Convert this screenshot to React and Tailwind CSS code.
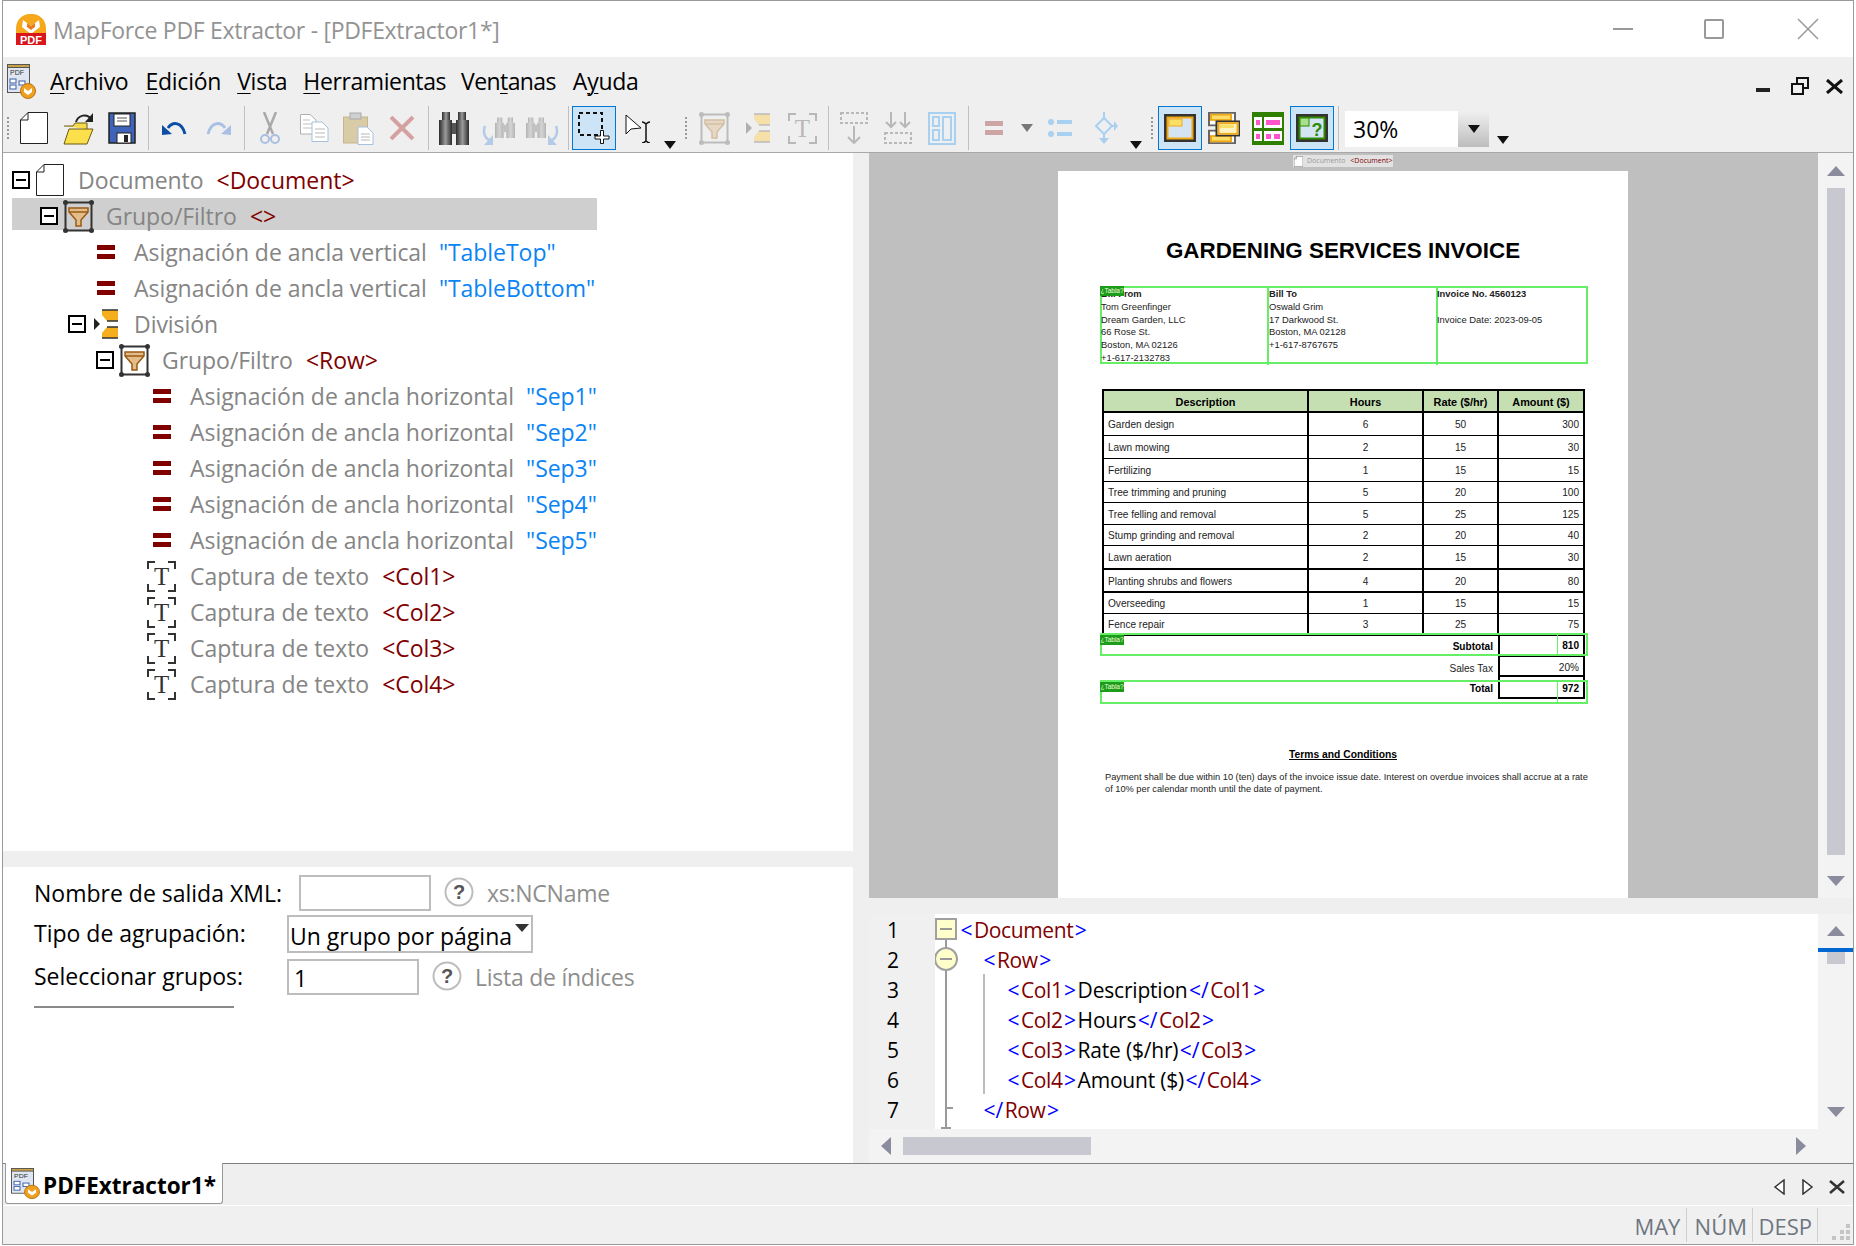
import React from "react";

const Tri = ({ dir = "up", className = "" }) => {
	const pts = {
		up: "9,0 18,10 0,10",
		down: "0,0 18,0 9,10",
		left: "10,0 10,18 0,9",
		right: "0,0 10,9 0,18",
	};
	const vertical = dir === "up" || dir === "down";
	return (
		<svg width={vertical ? 18 : 10} height={vertical ? 10 : 18} className={`block shrink-0 ${className}`}>
			<polygon points={pts[dir]} fill="#8a8c9e" />
		</svg>
	);
};

const LogoIcon = () => (
	<svg width="30" height="31" viewBox="0 0 30 31" className="shrink-0">
		<path d="M0 20V14A14 14 0 0 1 15 0A14 14 0 0 1 30 14V20Z" fill="#f5a81c" />
		<path d="M7 6L15 12L23 6L24 13L15 20L6 13Z" fill="#fff" />
		<path d="M11 9L15 12L19 9V13L15 16L11 13Z" fill="#e9791a" />
		<rect y="19" width="30" height="12" fill="#d8161c" />
		<text x="15" y="29.5" textAnchor="middle" fontSize="11" fontWeight="700" fill="#fff" fontFamily="Liberation Sans">PDF</text>
	</svg>
);

const AppIcon = ({ w = 29, h = 35 }) => (
	<svg width={w} height={h} viewBox="0 0 29 35" preserveAspectRatio="none" className="shrink-0">
		<rect x="0.5" y="0.5" width="22" height="28" fill="#dfe6f2" stroke="#555" />
		<rect x="0.5" y="0.5" width="22" height="3" fill="#c9a24a" stroke="#555" />
		<text x="3" y="11" fontSize="7" fill="#333" fontFamily="Liberation Sans">PDF</text>
		<rect x="3" y="15" width="6" height="4" fill="#fff" stroke="#3a5ca8" />
		<rect x="3" y="21" width="6" height="4" fill="#fff" stroke="#3a5ca8" />
		<rect x="12" y="17" width="6" height="4" fill="#fff" stroke="#3a5ca8" />
		<circle cx="21" cy="27" r="7.5" fill="#f0a020" stroke="#b87410" />
		<path d="M17 24L21 27L25 24V28L21 31L17 28Z" fill="#fff" />
	</svg>
);

const PageIcon = ({ w = 28, h = 32, stroke = "#222" }) => (
	<svg width={w} height={h} viewBox="0 0 28 32" className="shrink-0">
		<path d="M8 .5H27.5V31.5H.5V8ZM8 .5V8H.5" fill="#fff" stroke={stroke} />
	</svg>
);

const OpenIcon = () => (
	<svg width="31" height="33" viewBox="0 0 31 33">
		<path d="M1 14H10L12 11H24V17" fill="#f6d94a" stroke="#6b5a10" />
		<path d="M6 17H30L24 32H1Z" fill="#fbe04c" stroke="#6b5a10" />
		<path d="M13 10C15 3 24 1 28 7" fill="none" stroke="#222" strokeWidth="2" />
		<path d="M30 1V10H22Z" fill="#222" />
	</svg>
);

const SaveIcon = () => (
	<svg width="28" height="32" viewBox="0 0 28 32">
		<path d="M1 1H27V31H1Z" fill="#3f63b8" stroke="#222" strokeWidth="1.5" />
		<rect x="6" y="2" width="16" height="12" fill="#fff" stroke="#222" />
		<path d="M9 6H19M9 9H19" stroke="#555" />
		<rect x="9" y="21" width="14" height="10" fill="#fff" stroke="#222" />
		<rect x="16" y="23" width="4" height="7" fill="#222" />
	</svg>
);

const UndoIcon = ({ color = "#0c4ea6", flip = false }) => (
	<svg width="25" height="16" viewBox="0 0 25 16" className={flip ? "-scale-x-100" : ""}>
		<path d="M6 8C11 1 20 2 23 14" fill="none" stroke={color} strokeWidth="3" />
		<path d="M0 5L10 14L0 15Z" fill={color} />
	</svg>
);

const CutIcon = () => (
	<svg width="20" height="33" viewBox="0 0 20 33">
		<path d="M4 0L13 22M16 0L7 22" stroke="#a9a9a9" strokeWidth="2.5" fill="none" />
		<circle cx="5" cy="27" r="4" fill="none" stroke="#a8bfe0" strokeWidth="2" />
		<circle cx="15" cy="27" r="4" fill="none" stroke="#a8bfe0" strokeWidth="2" />
	</svg>
);

const CopyIcon = () => (
	<svg width="29" height="28" viewBox="0 0 29 28">
		<path d="M.5 .5H10L16 6V20H.5Z" fill="#fff" stroke="#b0b0b0" />
		<path d="M3 6H10M3 10H13M3 14H13" stroke="#c0c0c0" />
		<path d="M12 8H22L28 14V27.5H12Z" fill="#fff" stroke="#a8bfe0" />
		<path d="M15 15H25M15 19H25M15 23H25" stroke="#b8b8b8" />
	</svg>
);

const PasteIcon = () => (
	<svg width="31" height="33" viewBox="0 0 31 33">
		<rect x=".5" y="5" width="24" height="26" fill="#d8cba6" stroke="#c4b78e" />
		<rect x="7" y="1" width="11" height="6" fill="#d0d0d0" stroke="#aaa" />
		<path d="M15 15H24L30 21V32.5H15Z" fill="#fff" stroke="#a8bfe0" />
		<path d="M18 22H27M18 25H27M18 28H27" stroke="#b8b8b8" />
	</svg>
);

const DeleteIcon = () => (
	<svg width="26" height="24" viewBox="0 0 26 24">
		<path d="M2 1L24 23M24 1L2 23" stroke="#d4a0a0" strokeWidth="4" />
	</svg>
);

const BinoIcon = ({ faded = false, w = 30 }) => (
	<svg width={w} height="33" viewBox="0 0 30 33" className={faded ? "opacity-30" : ""}>
		<defs>
			<linearGradient id="bino" x1="0" x2="1" y1="0" y2="0">
				<stop offset="0" stopColor="#2c2c2c" />
				<stop offset="0.5" stopColor="#9a9a9a" />
				<stop offset="1" stopColor="#2c2c2c" />
			</linearGradient>
		</defs>
		<rect x="3" y="0" width="8" height="8" fill="url(#bino)" />
		<rect x="19" y="0" width="8" height="8" fill="url(#bino)" />
		<rect x="0" y="8" width="13" height="25" fill="url(#bino)" />
		<rect x="17" y="8" width="13" height="25" fill="url(#bino)" />
		<rect x="13" y="11" width="4" height="11" fill="#555" />
	</svg>
);

const FindIcon = ({ flip = false }) => (
	<div className={`relative w-[33px] h-[33px] ${flip ? "-scale-x-100" : ""}`}>
		<div className="absolute right-0 top-0 w-[20px] h-[26px] overflow-hidden">
			<BinoIcon faded w={20} />
		</div>
		<svg width="33" height="33" viewBox="0 0 33 33" className="absolute left-0 top-0">
			<path d="M3 14C0 22 4 28 10 29" fill="none" stroke="#b4cbe8" strokeWidth="2.5" />
			<path d="M11 23V33H2Z" fill="#b4cbe8" />
		</svg>
	</div>
);

const SelectIcon = () => (
	<svg width="32" height="32" viewBox="0 0 32 32">
		<rect x="1" y="1" width="23" height="22" fill="none" stroke="#111" strokeWidth="2" strokeDasharray="4 3" />
		<path d="M22.5 18.5H25.5V24H31V27H25.5V31.5H22.5V27H17V24H22.5Z" fill="#fff" stroke="#111" />
	</svg>
);

const CursorIcon = () => (
	<svg width="27" height="29" viewBox="0 0 27 29">
		<path d="M1 1V20L6 15L16 14Z" fill="#fff" stroke="#111" />
		<path d="M17 8C19 8 20 9 21 10C22 9 23 8 25 8M21 10V28M17 29C19 29 20 28 21 27C22 28 23 29 25 29" fill="none" stroke="#111" strokeWidth="1.5" />
	</svg>
);

const DropArrow = ({ color = "#111" }) => (
	<svg width="12" height="8" viewBox="0 0 12 8">
		<path d="M0 0H12L6 8Z" fill={color} />
	</svg>
);

const FilterIcon = ({ frame = "#333", fill = "#e3bc8b", edge = "#9a5a12" }) => (
	<svg width="31" height="33" viewBox="0 0 31 33" className="shrink-0">
		<rect x="2.5" y="2.5" width="26" height="28" fill="none" stroke={frame} strokeWidth="2" />
		<g fill={frame}>
			<circle cx="2.5" cy="2.5" r="2.5" />
			<circle cx="28.5" cy="2.5" r="2.5" />
			<circle cx="2.5" cy="30.5" r="2.5" />
			<circle cx="28.5" cy="30.5" r="2.5" />
		</g>
		<path d="M6 8H25V12L18 20V26H13V20L6 12Z" fill={fill} stroke={edge} strokeWidth="1.5" />
		<path d="M6 12H25" stroke={edge} strokeWidth="1.5" />
	</svg>
);

const SplitIcon = ({ fill = "#f5ae1c", edge = "#333", tri = "#222" }) => (
	<svg width="25" height="30" viewBox="0 0 25 30" className="shrink-0">
		<path d="M0 9L6 15L0 21Z" fill={tri} />
		<path d="M8 1H24V12H13L8 6Z" fill={fill} />
		<path d="M8 29H24V18H13L8 24Z" fill={fill} />
		<path d="M8 1H24M8 29H24M13 12H24M13 18H24" stroke={edge} strokeWidth="1.5" />
	</svg>
);

const CaptureIcon = ({ color = "#333" }) => (
	<svg width="29" height="31" viewBox="0 0 29 31" className="shrink-0">
		<path d="M1 8V1H8M21 1H28V8M1 23V30H8M21 30H28V23" fill="none" stroke={color} strokeWidth="2" />
		<text x="14.5" y="24" textAnchor="middle" fontSize="25" fill={color} fontFamily="Liberation Serif">T</text>
	</svg>
);

const DashDownIcon = () => (
	<svg width="28" height="32" viewBox="0 0 28 32" stroke="#b8b8b8" fill="none" strokeWidth="2">
		<rect x="1" y="1" width="26" height="10" strokeDasharray="3 2" />
		<path d="M14 14V31M8 25L14 31L20 25" />
	</svg>
);

const DoubleDownIcon = () => (
	<svg width="28" height="32" viewBox="0 0 28 32" stroke="#b8b8b8" fill="none" strokeWidth="2">
		<path d="M7 0V15M2 10L7 15L12 10M21 0V15M16 10L21 15L26 10" />
		<rect x="1" y="21" width="26" height="10" strokeDasharray="3 2" />
	</svg>
);

const LayoutIcon = () => (
	<svg width="28" height="33" viewBox="0 0 28 33" stroke="#a8d0f0" fill="none" strokeWidth="2">
		<rect x="1" y="1" width="26" height="31" />
		<rect x="5" y="5" width="6" height="9" />
		<rect x="5" y="18" width="6" height="10" />
		<rect x="15" y="5" width="8" height="23" />
	</svg>
);

const EqualsIcon = ({ color = "#800000" }) => (
	<svg width="18" height="14" viewBox="0 0 18 14" className="shrink-0">
		<rect width="18" height="5" fill={color} />
		<rect y="9" width="18" height="5" fill={color} />
	</svg>
);

const BulletsIcon = () => (
	<svg width="24" height="18" viewBox="0 0 24 18" fill="#a8d0f0">
		<circle cx="3" cy="3" r="3" />
		<circle cx="3" cy="15" r="3" />
		<rect x="9" y="1" width="15" height="4" />
		<rect x="9" y="13" width="15" height="4" />
	</svg>
);

const DiamondIcon = () => (
	<svg width="28" height="32" viewBox="0 0 28 32" fill="none" stroke="#a8d0f0" strokeWidth="2">
		<path d="M14 0V6M14 6L22 14L14 22L6 14ZM14 22V27M22 14H25" />
		<path d="M24 9L28 14L24 19Z" fill="#a8d0f0" stroke="none" />
		<path d="M9 26H19L14 32Z" fill="#a8d0f0" stroke="none" />
	</svg>
);

const PanelIcon = () => (
	<svg width="32" height="28" viewBox="0 0 32 28">
		<rect x="1.5" y="1.5" width="29" height="25" fill="#d3e5f5" stroke="#333" strokeWidth="3" />
		<rect x="3.5" y="3.5" width="25" height="21" fill="none" stroke="#f0a818" strokeWidth="2" />
		<rect x="5" y="5" width="13" height="7" fill="#f9df68" stroke="#f0a818" />
	</svg>
);

const GroupIcon = () => (
	<svg width="32" height="32" viewBox="0 0 32 36" preserveAspectRatio="none">
		<rect x="1" y="1" width="26" height="14" fill="#fff" stroke="#666" strokeWidth="2" />
		<rect x="1" y="21" width="26" height="14" fill="#fff" stroke="#666" strokeWidth="2" />
		<rect x="3" y="3" width="20" height="6" fill="#f9df68" stroke="#f0a818" strokeWidth="2" />
		<rect x="3" y="27" width="20" height="6" fill="#f9df68" stroke="#f0a818" strokeWidth="2" />
		<rect x="8.5" y="10.5" width="23" height="16" fill="#fff3c4" stroke="#333" strokeWidth="2" />
		<rect x="10.5" y="12.5" width="19" height="12" fill="none" stroke="#f0a818" strokeWidth="2" />
		<rect x="12" y="14" width="14" height="4" fill="#f9df68" />
	</svg>
);

const TableIcon = () => (
	<svg width="32" height="33" viewBox="0 0 32 33">
		<rect width="32" height="33" fill="#2f8000" />
		<rect x="2" y="5" width="8" height="11" fill="#fff" />
		<rect x="12" y="5" width="18" height="11" fill="#fff" />
		<rect x="2" y="19" width="8" height="10" fill="#fff" />
		<rect x="12" y="19" width="18" height="10" fill="#fff" />
		<rect x="4" y="8" width="4" height="5" fill="#ff55cc" />
		<rect x="14" y="8" width="14" height="5" fill="#ff55cc" />
		<rect x="4" y="22" width="4" height="5" fill="#ff55cc" />
		<rect x="14" y="22" width="5" height="5" fill="#ff55cc" />
		<rect x="22" y="22" width="6" height="5" fill="#ff55cc" />
	</svg>
);

const HelpPanelIcon = () => (
	<svg width="32" height="28" viewBox="0 0 32 28">
		<rect x="1.5" y="1.5" width="29" height="25" fill="#d3e5f5" stroke="#333" strokeWidth="3" />
		<rect x="3.5" y="3.5" width="25" height="21" fill="none" stroke="#2f8a00" strokeWidth="2" />
		<rect x="4" y="4" width="9" height="8" fill="#a8e08c" stroke="#2f8a00" />
		<text x="21" y="22" textAnchor="middle" fontSize="18" fontWeight="700" fill="#2f8a00" fontFamily="Liberation Sans">?</text>
	</svg>
);

const HelpCircle = () => (
	<svg width="30" height="30" viewBox="0 0 30 30" className="shrink-0">
		<circle cx="15" cy="15" r="13.5" fill="#fff" stroke="#bdbdbd" strokeWidth="2" />
		<text x="15" y="22" textAnchor="middle" fontSize="20" fontWeight="700" fill="#555" fontFamily="Liberation Sans">?</text>
	</svg>
);

const Expander = () => (
	<div className="w-[18px] h-[18px] border-2 border-black bg-white flex items-center justify-center shrink-0">
		<div className="w-[10px] h-[2px] bg-black" />
	</div>
);

const Btn = ({ active, children }) => (
	<div
		className={`w-[44px] h-[44px] shrink-0 flex items-center justify-center ${
			active ? "bg-[#cde4f7] border border-[#0078d7]" : ""
		}`}
	>
		{children}
	</div>
);

const Sep = () => (
	<div className="w-[8px] h-[44px] shrink-0 flex justify-center">
		<div className="w-px h-full bg-[#c0c0c0]" />
	</div>
);

const Grip = ({ w = "w-[12px]" }) => (
	<div className={`${w} h-[44px] shrink-0 flex flex-col items-center justify-center gap-[2px]`}>
		<div className="w-[2px] h-[2px] bg-[#999]" />
		<div className="w-[2px] h-[2px] bg-[#999]" />
		<div className="w-[2px] h-[2px] bg-[#999]" />
		<div className="w-[2px] h-[2px] bg-[#999]" />
		<div className="w-[2px] h-[2px] bg-[#999]" />
		<div className="w-[2px] h-[2px] bg-[#999]" />
	</div>
);

const ArrowSlot = ({ color, mid }) => (
	<div className={`h-[44px] shrink-0 flex justify-center ${mid ? "w-[22px] items-center" : "w-[20px] items-end pb-[1px]"}`}>
		<DropArrow color={color} />
	</div>
);

const Toolbar = () => (
	<div className="h-[47px] pt-[1px] flex bg-[#efefef]">
		<Grip w="w-[9px]" />
		<Btn><PageIcon /></Btn>
		<Btn><OpenIcon /></Btn>
		<Btn><SaveIcon /></Btn>
		<Sep />
		<Btn><UndoIcon /></Btn>
		<Btn><UndoIcon color="#a8c0e4" flip /></Btn>
		<Sep />
		<Btn><CutIcon /></Btn>
		<Btn><CopyIcon /></Btn>
		<Btn><PasteIcon /></Btn>
		<Btn><DeleteIcon /></Btn>
		<Sep />
		<Btn><BinoIcon /></Btn>
		<Btn><FindIcon /></Btn>
		<Btn><FindIcon flip /></Btn>
		<Sep />
		<Btn active><SelectIcon /></Btn>
		<Btn><CursorIcon /></Btn>
		<ArrowSlot />
		<Grip />
		<Btn><FilterIcon frame="#bcbcbc" fill="#e6d8c4" edge="#d2bfa4" /></Btn>
		<Btn><SplitIcon fill="#f6dfa8" edge="#bcbcbc" tri="#b0b0b0" /></Btn>
		<Btn><CaptureIcon color="#b8b8b8" /></Btn>
		<Sep />
		<Btn><DashDownIcon /></Btn>
		<Btn><DoubleDownIcon /></Btn>
		<Btn><LayoutIcon /></Btn>
		<Sep />
		<Btn><EqualsIcon color="#cda5a5" /></Btn>
		<ArrowSlot color="#777" mid />
		<Btn><BulletsIcon /></Btn>
		<Btn><DiamondIcon /></Btn>
		<ArrowSlot />
		<Grip />
		<Btn active><PanelIcon /></Btn>
		<Btn><GroupIcon /></Btn>
		<Btn><TableIcon /></Btn>
		<Btn active><HelpPanelIcon /></Btn>
		<Sep />
		<div className="ml-[3px] mt-[5px] w-[144px] h-[36px] bg-white flex items-center justify-between text-[23px] text-black">
			<span className="ml-[8px]">30%</span>
			<div className="w-[31px] h-[36px] bg-gradient-to-b from-[#f0f0f0] to-[#bdbdbd] flex items-center justify-center">
				<DropArrow />
			</div>
		</div>
		<div className="w-[28px] h-[44px] flex justify-center items-end pb-[6px]">
			<DropArrow />
		</div>
	</div>
);

const Menu = ({ u, rest, pre, className = "" }) => (
	<span className={className}>
		{pre}
		<span className="underline decoration-1 underline-offset-[3px]">{u}</span>
		{rest}
	</span>
);

const TreeRow = ({ pl, exp, expGap, icon, labelCls, label, tag, value }) => (
	<div className={`h-[36px] flex items-center ${pl}`}>
		{exp && <Expander />}
		{exp && <div className={expGap} />}
		{icon}
		<span className={`${labelCls} text-[#858585]`}>{label}</span>
		{tag && <span className="ml-[13px] text-[#800000]">{tag}</span>}
		{value && <span className="ml-[12px] text-[#0a84f5]">{value}</span>}
	</div>
);

const Tree = () => (
	<div className="h-[698px] bg-white pt-[9px] text-[23px] tracking-[-0.05px]">
		<TreeRow pl="pl-[9px]" exp expGap="w-[6px]" icon={<PageIcon />} labelCls="ml-[14px]" label="Documento" tag="<Document>" />
		<div className="h-[36px] ml-[9px] w-[585px]">
			<div className="h-[32px] bg-[#cfcfcf]">
				<TreeRow pl="pl-[28px]" exp expGap="w-[5px]" icon={<FilterIcon />} labelCls="ml-[12px]" label="Grupo/Filtro" tag="<>" />
			</div>
		</div>
		<TreeRow pl="pl-[94px]" icon={<EqualsIcon />} labelCls="ml-[19px]" label="Asignación de ancla vertical" value={'"TableTop"'} />
		<TreeRow pl="pl-[94px]" icon={<EqualsIcon />} labelCls="ml-[19px]" label="Asignación de ancla vertical" value={'"TableBottom"'} />
		<TreeRow pl="pl-[65px]" exp expGap="w-[8px]" icon={<SplitIcon />} labelCls="ml-[15px]" label="División" />
		<TreeRow pl="pl-[93px]" exp expGap="w-[5px]" icon={<FilterIcon />} labelCls="ml-[12px]" label="Grupo/Filtro" tag="<Row>" />
		{["Sep1", "Sep2", "Sep3", "Sep4", "Sep5"].map((s) => (
			<TreeRow key={s} pl="pl-[150px]" icon={<EqualsIcon />} labelCls="ml-[19px]" label="Asignación de ancla horizontal" value={`"${s}"`} />
		))}
		{["Col1", "Col2", "Col3", "Col4"].map((c) => (
			<TreeRow key={c} pl="pl-[144px]" icon={<CaptureIcon />} labelCls="ml-[14px]" label="Captura de texto" tag={`<${c}>`} />
		))}
	</div>
);

const Props = () => (
	<div className="flex-1 bg-white pl-[31px] text-[23px] text-black">
		<div className="h-[48px] pt-[8px] flex items-start">
			<span className="w-[265px] h-[36px] leading-[36px] shrink-0">Nombre de salida XML:</span>
			<div className="w-[132px] h-[36px] border-2 border-[#bdbdbd] shrink-0" />
			<div className="ml-[13px] mt-[2px]"><HelpCircle /></div>
			<span className="ml-[13px] h-[36px] leading-[36px] tracking-[-0.25px] text-[#8e8e8e]">xs:NCName</span>
		</div>
		<div className="h-[44px] flex items-start">
			<span className="w-[253px] h-[36px] leading-[36px] shrink-0">Tipo de agrupación:</span>
			<div className="w-[246px] h-[38px] border-2 border-[#bdbdbd] flex items-center justify-between pl-[1px] pr-[2px] shrink-0">
				<span className="mt-[4px]">Un grupo por página</span>
				<svg width="14" height="8" viewBox="0 0 14 8" className="mb-[12px]"><path d="M0 0H14L7 8Z" fill="#333" /></svg>
			</div>
		</div>
		<div className="h-[49px] flex items-start">
			<span className="w-[253px] h-[35px] leading-[35px] shrink-0">Seleccionar grupos:</span>
			<div className="w-[132px] h-[36px] border-2 border-[#bdbdbd] pl-[5px] leading-[34px] shrink-0">1</div>
			<div className="ml-[13px] mt-[2px]"><HelpCircle /></div>
			<span className="ml-[13px] h-[36px] leading-[36px] tracking-[-0.25px] text-[#8e8e8e]">Lista de índices</span>
		</div>
		<div className="w-[200px] h-[2px] bg-[#8a8a8a] -mt-[2px]" />
	</div>
);

const Tag = () => (
	<div className="absolute left-0 top-0 w-[24px] h-[10px] bg-[#1b9c1b] text-[6.5px] leading-[10px] text-[#f3ffd8] text-center overflow-hidden">
		¿Tabla?
	</div>
);

const invoiceRows = [
	["Garden design", 6, 50, 300, "h-[23px] border-b"],
	["Lawn mowing", 2, 15, 30, "h-[23px] border-b"],
	["Fertilizing", 1, 15, 15, "h-[23px] border-b"],
	["Tree trimming and pruning", 5, 20, 100, "h-[21px] border-b"],
	["Tree felling and removal", 5, 25, 125, "h-[22px] border-b"],
	["Stump grinding and removal", 2, 20, 40, "h-[21px] border-b"],
	["Lawn aeration", 2, 15, 30, "h-[24px] border-b-2"],
	["Planting shrubs and flowers", 4, 20, 80, "h-[23px] border-b-2"],
	["Overseeding", 1, 15, 15, "h-[21px] border-b"],
	["Fence repair", 3, 25, 75, "h-[20px]"],
];

const Invoice = () => (
	<div className="relative w-[570px] mt-[4px] flex-1 bg-white overflow-hidden [font-family:'Liberation_Sans',sans-serif] text-[#222] text-[10.1px] tracking-normal">
		<div className="pt-[67px] h-[93px] text-center text-[22.4px] leading-[26px] font-bold text-black whitespace-nowrap">
			GARDENING SERVICES INVOICE
		</div>
		<div className="relative ml-[42px] mt-[22px] w-[488px] h-[78px] border-2 border-[#66ee66] grid grid-cols-[167px_169px_1fr] text-[9.4px] leading-[12.8px]">
			<div className="border-r-2 border-[#66ee66] -ml-px pl-0">
				<b>Bill From</b><br />Tom Greenfinger<br />Dream Garden, LLC<br />66 Rose St.<br />Boston, MA 02126<br />+1-617-2132783
			</div>
			<div className="border-r-2 border-[#66ee66]">
				<b>Bill To</b><br />Oswald Grim<br />17 Darkwood St.<br />Boston, MA 02128<br />+1-617-8767675
			</div>
			<div className="-ml-px">
				<b>Invoice No. 4560123</b><br /><br />Invoice Date: 2023-09-05
			</div>
			<div className="absolute -left-[2px] -top-[2px]"><div className="relative w-[24px] h-[10px]"><Tag /></div></div>
		</div>
		<div className="ml-[44px] mt-[25px] w-[483px] border-2 border-b-0 border-black">
			<div className="grid grid-cols-[205px_115px_75px_1fr] h-[22px] bg-[#c5dfb3] border-b-2 border-black font-bold text-center text-[10.9px] leading-[23px] text-black">
				<div className="border-r-2 border-black">Description</div>
				<div className="border-r-2 border-black">Hours</div>
				<div className="border-r-2 border-black">Rate ($/hr)</div>
				<div>Amount ($)</div>
			</div>
			{invoiceRows.map(([name, hours, rate, amount, cls]) => (
				<div key={name} className={`grid grid-cols-[205px_115px_75px_1fr] border-black ${cls}`}>
					<div className="border-r-2 border-black pl-[4px] pt-[2px] flex items-center whitespace-nowrap">{name}</div>
					<div className="border-r-2 border-black pt-[2px] flex items-center justify-center">{hours}</div>
					<div className="border-r-2 border-black pt-[2px] flex items-center justify-center">{rate}</div>
					<div className="pt-[2px] flex items-center justify-end pr-[4px]">{amount}</div>
				</div>
			))}
		</div>
		<div className="ml-[44px] w-[483px] border-t-2 border-black">
			<div className="flex h-[21px] font-bold text-black">
				<div className="w-[396px] pr-[5px] text-right leading-[21px]">Subtotal</div>
				<div className="flex-1 border-l-2 border-r-2 border-b-2 border-black pr-[4px] text-right leading-[20px]">810</div>
			</div>
			<div className="flex h-[20px]">
				<div className="w-[396px] pr-[5px] text-right leading-[24px]">Sales Tax</div>
				<div className="flex-1 border-l-2 border-r-2 border-b-2 border-black pr-[4px] text-right leading-[22px]">20%</div>
			</div>
			<div className="flex h-[22px] font-bold text-black">
				<div className="w-[396px] pr-[5px] text-right leading-[24px]">Total</div>
				<div className="flex-1 border-l-2 border-r-2 border-b-2 border-black pr-[4px] text-right leading-[24px]">972</div>
			</div>
		</div>
		<div className="mt-[49px] text-center font-bold underline text-black text-[10.3px] leading-[14px]">Terms and Conditions</div>
		<div className="ml-[47px] mt-[9px] text-[9.25px] leading-[12px] whitespace-nowrap">
			Payment shall be due within 10 (ten) days of the invoice issue date. Interest on overdue invoices shall accrue at a rate
			<br />
			of 10% per calendar month until the date of payment.
		</div>
		<div className="absolute left-[42px] top-[462px] w-[488px] h-[23px] border-2 border-[#66ee66]">
			<div className="absolute -left-[2px] top-0 w-[24px] h-[10px]"><Tag /></div>
			<div className="absolute left-[455px] -top-[2px] -bottom-[2px] w-px bg-[#66ee66]" />
		</div>
		<div className="absolute left-[42px] top-[509px] w-[488px] h-[24px] border-2 border-[#66ee66]">
			<div className="absolute -left-[2px] top-0 w-[24px] h-[10px]"><Tag /></div>
			<div className="absolute left-[455px] -top-[2px] -bottom-[2px] w-px bg-[#66ee66]" />
		</div>
	</div>
);

const B = ({ children }) => <span className="text-[#0000ff] mx-[1.5px]">{children}</span>;
const N = ({ children }) => <span className="text-[#800000] tracking-[-0.4px]">{children}</span>;

const ColLine = ({ col, text }) => (
	<div className="h-[30px] pl-[47px] flex items-center whitespace-nowrap">
		<B>&lt;</B><N>{col}</N><B>&gt;</B>
		<span className="text-black tracking-[-0.2px]">{text}</span>
		<B>&lt;/</B><N>{col}</N><B>&gt;</B>
	</div>
);

const FoldColumn = () => (
	<svg width="24" height="215" viewBox="0 0 24 215" className="shrink-0">
		<path d="M11 26V215" stroke="#9a9a9a" strokeWidth="2" />
		<rect x="1" y="5" width="20" height="20" fill="#ffffcc" stroke="#a0a0a0" strokeWidth="2" />
		<path d="M5 15H17" stroke="#999" strokeWidth="2" />
		<circle cx="11" cy="45" r="11" fill="#ffffcc" stroke="#a0a0a0" strokeWidth="2" />
		<path d="M5 45H17" stroke="#999" strokeWidth="2" />
		<path d="M11 194H18" stroke="#9a9a9a" strokeWidth="2" />
		<path d="M6 214H16" stroke="#9a9a9a" strokeWidth="2" />
	</svg>
);

const XmlPane = () => (
	<div className="h-[215px] flex text-[21px] overflow-hidden">
		<div className="flex-1 flex bg-white">
			<div className="w-[66px] bg-[#f0f0f0] pt-px pl-[18px] shrink-0 text-black">
				{[1, 2, 3, 4, 5, 6, 7].map((n) => (
					<div key={n} className="h-[30px] leading-[30px]">{n}</div>
				))}
			</div>
			<FoldColumn />
			<div className="relative flex-1 pt-[2px]">
				<div className="absolute left-[24px] top-[60px] w-[2px] h-[120px] bg-[#bcbcbc]" />
				<div className="h-[30px] flex items-center"><B>&lt;</B><N>Document</N><B>&gt;</B></div>
				<div className="h-[30px] pl-[23px] flex items-center"><B>&lt;</B><N>Row</N><B>&gt;</B></div>
				<ColLine col="Col1" text="Description" />
				<ColLine col="Col2" text="Hours" />
				<ColLine col="Col3" text="Rate ($/hr)" />
				<ColLine col="Col4" text="Amount ($)" />
				<div className="h-[30px] pl-[23px] flex items-center"><B>&lt;/</B><N>Row</N><B>&gt;</B></div>
			</div>
		</div>
		<div className="w-[35px] bg-[#f3f3f3] flex flex-col items-center pt-[12px] pb-[12px]">
			<Tri dir="up" />
			<div className="mt-[12px] w-full h-[4px] bg-[#0068d0]" />
			<div className="w-[18px] h-[12px] bg-[#c8c9d0]" />
			<Tri dir="down" className="mt-auto" />
		</div>
	</div>
);

const App = () => (
	<div className="w-[1856px] h-[1246px] bg-white overflow-hidden pl-[2px] [font-family:'Open_Sans',sans-serif]">
		<div className="w-[1852px] h-[1245px] border border-[#9a9a9a] flex flex-col">
			<div className="h-[56px] bg-white flex items-center pl-[13px] shrink-0">
				<LogoIcon />
				<span className="ml-[7px] mt-[2px] text-[23px] tracking-[-0.3px] text-[#939393]">MapForce PDF Extractor - [PDFExtractor1*]</span>
				<div className="ml-auto flex items-center">
					<div className="w-[20px] h-[2px] bg-[#999]" />
					<div className="ml-[71px] w-[20px] h-[20px] border-2 border-[#999] rounded-[2px]" />
					<svg width="22" height="22" viewBox="0 0 22 22" className="ml-[73px] mr-[34px]">
						<path d="M1 1L21 21M21 1L1 21" stroke="#999" strokeWidth="1.5" />
					</svg>
				</div>
			</div>
			<div className="h-[48px] bg-[#efefef] flex items-center pl-[4px] text-[23px] text-black shrink-0">
				<AppIcon />
				<div className="ml-[14px] flex gap-[16px] tracking-[-0.25px]">
					<Menu u="A" rest="rchivo" className="mr-px" />
					<Menu u="E" rest="dición" />
					<Menu u="V" rest="ista" />
					<Menu u="H" rest="erramientas" className="tracking-[-0.4px]" />
					<Menu pre="Ven" u="t" rest="anas" className="-ml-px tracking-[-0.6px]" />
					<Menu pre="A" u="y" rest="uda" className="ml-px" />
				</div>
				<div className="ml-auto mr-[10px] mt-[10px] flex items-center">
					<div className="w-[14px] h-[4px] bg-[#222] mt-[8px]" />
					<svg width="18" height="18" viewBox="0 0 18 18" className="ml-[21px]" fill="none" stroke="#111" strokeWidth="2">
						<rect x="6" y="1" width="11" height="10" />
						<rect x="1" y="7" width="11" height="10" fill="#efefef" />
					</svg>
					<svg width="17" height="15" viewBox="0 0 17 15" className="ml-[17px]">
						<path d="M1 1L16 14M16 1L1 14" stroke="#111" strokeWidth="3" />
					</svg>
				</div>
			</div>
			<Toolbar />
			<div className="h-px bg-[#a8a8a8] shrink-0" />
			<div className="h-[1010px] flex shrink-0">
				<div className="w-[850px] flex flex-col shrink-0">
					<Tree />
					<div className="h-[16px] bg-[#efefef]" />
					<Props />
				</div>
				<div className="w-[16px] bg-[#efefef] shrink-0" />
				<div className="flex-1 flex flex-col">
					<div className="h-[745px] flex">
						<div className="flex-1 bg-[#bfbfbf] flex flex-col items-center pt-[2px] pr-[1px]">
							<div className="h-[12px] w-[100px] bg-[#e2e2e2] flex items-center pl-[1px] gap-[2px] text-[7px] whitespace-nowrap">
								<PageIcon w={9} h={11} />
								<span className="text-[#999] ml-[2px]">Documento</span>
								<span className="text-[#800000] ml-[3px]">&lt;Document&gt;</span>
							</div>
							<Invoice />
						</div>
						<div className="w-[35px] bg-[#f3f3f3] flex flex-col items-center pt-[13px]">
							<Tri dir="up" />
							<div className="mt-[12px] w-[18px] h-[667px] bg-[#c8c9d0]" />
							<Tri dir="down" className="mt-[21px]" />
						</div>
					</div>
					<div className="h-[16px] bg-[#efefef]" />
					<XmlPane />
					<div className="h-[34px] bg-[#f3f3f3] flex items-center pl-[12px]">
						<Tri dir="left" />
						<div className="ml-[12px] w-[188px] h-[18px] bg-[#c8c9d0]" />
						<Tri dir="right" className="ml-[705px]" />
					</div>
				</div>
			</div>
			<div className="h-[42px] bg-[#efefef] border-t border-[#808080] flex items-start pl-[2px] shrink-0">
				<div className="w-[218px] h-[41px] -mt-px bg-white border border-t-0 border-[#9a9a9a] rounded-b-[3px] flex items-center pl-[5px] gap-[3px]">
					<AppIcon w={29} h={31} />
					<span className="mt-[5px] text-[22.5px] font-bold text-black">PDFExtractor1*</span>
				</div>
				<div className="ml-auto mr-[8px] mt-[15px] flex items-center gap-[15px]">
					<svg width="13" height="16" viewBox="0 0 13 16" fill="#fff" stroke="#333" strokeWidth="1.5"><path d="M11 1V15L2 8Z" /></svg>
					<svg width="13" height="16" viewBox="0 0 13 16" fill="#fff" stroke="#333" strokeWidth="1.5"><path d="M2 1V15L11 8Z" /></svg>
					<svg width="16" height="14" viewBox="0 0 16 14"><path d="M1 1L15 13M15 1L1 13" stroke="#333" strokeWidth="2.5" /></svg>
				</div>
			</div>
			<div className="h-px bg-white shrink-0" />
			<div className="flex-1 bg-[#f0f0f0] flex justify-end items-center text-[22px] text-[#6f7680]">
				<div className="w-[66px] h-[34px] border-r border-[#cfcfcf] pr-[6px] text-right leading-[36px] tracking-[-0.2px]">MAY</div>
				<div className="w-[66px] h-[34px] border-r border-[#cfcfcf] pr-[5px] text-right leading-[36px]">NÚM</div>
				<div className="w-[65px] h-[34px] border-r border-[#cfcfcf] pr-[5px] text-right leading-[36px]">DESP</div>
				<svg width="35" height="34" viewBox="0 0 35 34" fill="#c4c4c4">
					<rect x="28" y="16" width="4" height="4" />
					<rect x="22" y="22" width="4" height="4" />
					<rect x="28" y="22" width="4" height="4" />
					<rect x="14" y="28" width="4" height="4" />
					<rect x="22" y="28" width="4" height="4" />
					<rect x="28" y="28" width="4" height="4" />
				</svg>
			</div>
		</div>
	</div>
);

export default App;
